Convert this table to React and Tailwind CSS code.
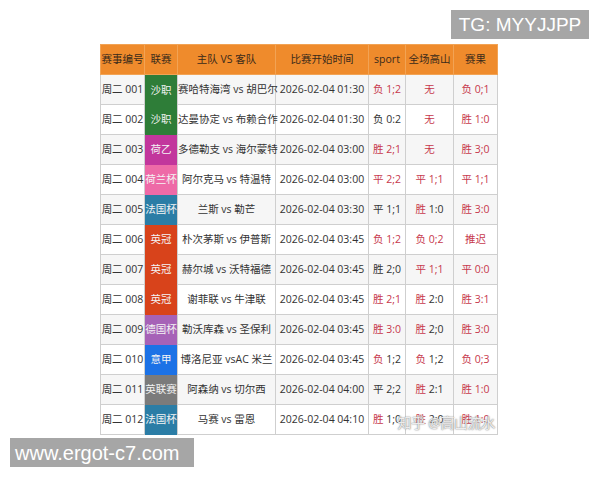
import React from 'react';

const RED = 'text-[#c7384c]';
const DARK = 'text-[#333333]';

// result cell: [word, score, wordRed, scoreRed]
const rows = [
  { no: '001', lg: '沙职', lgc: 'bg-[#2e7d38]', teams: '赛哈特海湾 vs 胡巴尔', time: '01:30', sp: ['负', '1;2', 1, 1], ft: ['无', '', 1, 1], rs: ['负', '0;1', 1, 1] },
  { no: '002', lg: '沙职', lgc: 'bg-[#2e7d38]', teams: '达曼协定 vs 布赖合作', time: '01:30', sp: ['负', '0:2', 0, 0], ft: ['无', '', 1, 1], rs: ['胜', '1:0', 1, 1] },
  { no: '003', lg: '荷乙', lgc: 'bg-[#c2369c]', teams: '多德勒支 vs 海尔蒙特', time: '03:00', sp: ['胜', '2;1', 1, 1], ft: ['无', '', 1, 1], rs: ['胜', '3;0', 1, 1] },
  { no: '004', lg: '荷兰杯', lgc: 'bg-[#ee6aa7]', teams: '阿尔克马 vs 特温特', time: '03:00', sp: ['平', '2;2', 1, 1], ft: ['平', '1;1', 1, 1], rs: ['平', '1;1', 1, 1] },
  { no: '005', lg: '法国杯', lgc: 'bg-[#2b7da6]', teams: '兰斯 vs 勒芒', time: '03:30', sp: ['平', '1;1', 0, 0], ft: ['胜', '1:0', 1, 0], rs: ['胜', '3:0', 1, 1] },
  { no: '006', lg: '英冠', lgc: 'bg-[#d8431b]', teams: '朴次茅斯 vs 伊普斯', time: '03:45', sp: ['负', '1;2', 1, 1], ft: ['负', '0;2', 1, 1], rs: ['推迟', '', 1, 1] },
  { no: '007', lg: '英冠', lgc: 'bg-[#d8431b]', teams: '赫尔城 vs 沃特福德', time: '03:45', sp: ['胜', '2;0', 0, 0], ft: ['平', '1;1', 1, 1], rs: ['平', '0:0', 1, 1] },
  { no: '008', lg: '英冠', lgc: 'bg-[#d8431b]', teams: '谢菲联 vs 牛津联', time: '03:45', sp: ['胜', '2;1', 1, 1], ft: ['胜', '2:0', 1, 0], rs: ['胜', '3:1', 1, 1] },
  { no: '009', lg: '德国杯', lgc: 'bg-[#a662b7]', teams: '勒沃库森 vs 圣保利', time: '03:45', sp: ['胜', '3:0', 1, 1], ft: ['胜', '2;0', 1, 0], rs: ['胜', '3:0', 1, 1] },
  { no: '010', lg: '意甲', lgc: 'bg-[#1c72e6]', teams: '博洛尼亚 vsAC 米兰', time: '03:45', sp: ['负', '1;2', 1, 0], ft: ['负', '1;2', 1, 0], rs: ['负', '0;3', 1, 1] },
  { no: '011', lg: '英联赛', lgc: 'bg-[#7b7b7b]', teams: '阿森纳 vs 切尔西', time: '04:00', sp: ['平', '2;2', 0, 0], ft: ['胜', '2:1', 1, 0], rs: ['胜', '1:0', 1, 1] },
  { no: '012', lg: '法国杯', lgc: 'bg-[#2b7da6]', teams: '马赛 vs 雷恩', time: '04:10', sp: ['胜', '1;0', 1, 0], ft: ['胜', '2:0', 1, 0], rs: ['胜', '1:0', 1, 1] },
];

const Result = ({ r }) => (
  <>
    <span className={r[2] ? RED : DARK}>{r[0]}</span>
    {r[1] && <span className={r[3] ? RED : DARK}> {r[1]}</span>}
  </>
);

const th = 'h-[30px] border border-[#f2a354] font-normal text-[#3a2a1a] p-0';
const td = 'h-[30px] border border-[#cfcfcf] p-0 text-center';

export default function App() {
  return (
    <div className="w-[600px] h-[480px] bg-white pt-[10px] flex flex-col" style={{ fontFamily: '"Open Sans", "Noto Sans CJK SC", sans-serif' }}>
      {/* watermark top */}
      <div className="self-end mr-[11px] w-[138px] h-[29px] bg-[#a6a6a6] flex items-center justify-center text-white text-[19px] leading-none" style={{ fontFamily: '"Liberation Sans", Arial, sans-serif' }}>
        TG: MYYJJPP
      </div>

      <div className="relative ml-[100px] mt-[5px] w-[397px]">
        <table className="w-[397px] table-fixed border-collapse text-[10.5px] leading-none">
          <colgroup>
            <col className="w-[44px]" />
            <col className="w-[33px]" />
            <col className="w-[98px]" />
            <col className="w-[93px]" />
            <col className="w-[37px]" />
            <col className="w-[48px]" />
            <col className="w-[44px]" />
          </colgroup>
          <thead>
            <tr className="bg-[#ef8b2c]">
              <th className={th}>赛事编号</th>
              <th className={th}>联赛</th>
              <th className={th}>主队 VS 客队</th>
              <th className={th}>比赛开始时间</th>
              <th className={th}>sport</th>
              <th className={th}>全场高山</th>
              <th className={th}>赛果</th>
            </tr>
          </thead>
          <tbody className="text-[#333333]">
            {rows.map((r, i) => (
              <tr key={r.no} className={i % 2 === 0 ? 'bg-[#f6f6f6]' : 'bg-white'}>
                <td className={td}>周二 {r.no}</td>
                <td className={`${td} ${r.lgc} text-[#f4f4f4] border-y-0 whitespace-nowrap overflow-hidden`}>{r.lg}</td>
                <td className={`${td} whitespace-nowrap`}>{r.teams}</td>
                <td className={`${td} whitespace-nowrap`}>2026-02-04 {r.time}</td>
                <td className={`${td} whitespace-nowrap`}><Result r={r.sp} /></td>
                <td className={`${td} whitespace-nowrap`}><Result r={r.ft} /></td>
                <td className={`${td} whitespace-nowrap`}><Result r={r.rs} /></td>
              </tr>
            ))}
          </tbody>
        </table>
        <div className="absolute right-[2px] bottom-[5px] text-[14px] leading-none text-white/85 tracking-tight" style={{ textShadow: '0 0 1px #777, 0 0 2px #999' }}>
          知乎 @高山流水
        </div>
      </div>

      <div className="ml-[10px] mt-[3px] w-[184px] h-[29px] bg-[#a6a6a6] flex items-center pl-[5px] text-white text-[20px] leading-none" style={{ fontFamily: '"Liberation Sans", Arial, sans-serif' }}>
        www.ergot-c7.com
      </div>
    </div>
  );
}
